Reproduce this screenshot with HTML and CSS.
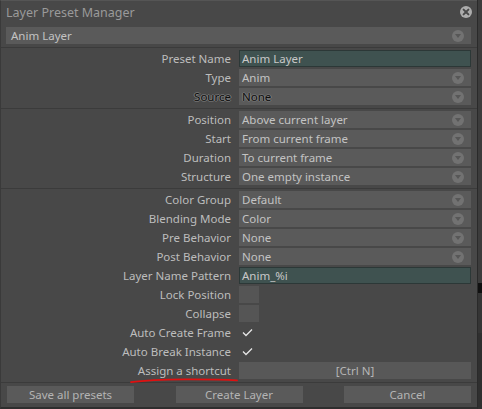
FILE: index.html
```html
<!DOCTYPE html>
<html>
<head>
<meta charset="utf-8">
<link rel="stylesheet" href="styles.css">
</head>
<body>
<div class="screen">
  <div class="dialog">
    <div class="titlebar">
      <span class="title">Layer Preset Manager</span>
      <span class="close"><svg width="12" height="12" viewBox="0 0 12 12"><circle cx="6" cy="6" r="6" fill="#adadad"/><path d="M3.6 3.6 L8.4 8.4 M8.4 3.6 L3.6 8.4" stroke="#4a4a4a" stroke-width="2" stroke-linecap="round"/></svg></span>
    </div>
    <div class="presetbar">
      <div class="combo top"><span>Anim Layer</span><i class="arrow"></i></div>
    </div>

    <div class="section">
      <div class="row"><label>Preset Name</label><div class="text">Anim Layer</div></div>
      <div class="row"><label>Type</label><div class="combo"><span>Anim</span><i class="arrow"></i></div></div>
      <div class="row dim"><label>Source</label><div class="combo"><span>None</span><i class="arrow"></i></div></div>
    </div>

    <div class="section">
      <div class="row"><label>Position</label><div class="combo"><span>Above current layer</span><i class="arrow"></i></div></div>
      <div class="row"><label>Start</label><div class="combo"><span>From current frame</span><i class="arrow"></i></div></div>
      <div class="row"><label>Duration</label><div class="combo"><span>To current frame</span><i class="arrow"></i></div></div>
      <div class="row"><label>Structure</label><div class="combo"><span>One empty instance</span><i class="arrow"></i></div></div>
    </div>

    <div class="section">
      <div class="row"><label>Color Group</label><div class="combo"><span>Default</span><i class="arrow"></i></div></div>
      <div class="row"><label>Blending Mode</label><div class="combo"><span>Color</span><i class="arrow"></i></div></div>
      <div class="row"><label>Pre Behavior</label><div class="combo"><span>None</span><i class="arrow"></i></div></div>
      <div class="row"><label>Post Behavior</label><div class="combo"><span>None</span><i class="arrow"></i></div></div>
      <div class="row"><label>Layer Name Pattern</label><div class="text">Anim_%i</div></div>
      <div class="row"><label>Lock Position</label><div class="box"></div></div>
      <div class="row"><label>Collapse</label><div class="box"></div></div>
      <div class="row"><label>Auto Create Frame</label><div class="check"><svg width="11" height="9" viewBox="0 0 11 9"><path d="M1 4.5 L4 7.5 L10 1.5" fill="none" stroke="#e6e6e6" stroke-width="1.3"/></svg></div></div>
      <div class="row"><label>Auto Break Instance</label><div class="check"><svg width="11" height="9" viewBox="0 0 11 9"><path d="M1 4.5 L4 7.5 L10 1.5" fill="none" stroke="#e6e6e6" stroke-width="1.3"/></svg></div></div>
      <div class="row"><label>Assign a shortcut</label><div class="shortcut">[Ctrl N]</div></div>
      <svg class="annot" width="110" height="6" viewBox="0 0 110 6"><path d="M1 4.2 Q 20 1.6 55 1.4 Q 90 1.3 107 2.4" fill="none" stroke="#e01010" stroke-width="1.8" stroke-linecap="round"/></svg>
    </div>

    <div class="buttons">
      <div class="btn">Save all presets</div>
      <div class="btn">Create Layer</div>
      <div class="btn">Cancel</div>
    </div>
  </div>
  <div class="strip">
    <div class="s1"></div>
    <div class="s2"></div>
    <div class="s3"></div>
    <div class="s4"></div>
  </div>
</div>
</body>
</html>
```
FILE: styles.css
```css
html, body {
  margin: 0;
  padding: 0;
  background: #2c2c2c;
}
body {
  font-family: "Noto Sans", "Open Sans", sans-serif;
  font-size: 11.5px;
  color: #bdbdbd;
}
.screen {
  display: flex;
  width: 482px;
  height: 409px;
  overflow: hidden;
}
.dialog {
  width: 476px;
  height: 406px;
  background: #484848;
  border-left: 1px solid #3a3a3a;
  border-top: 1px solid #555;
  border-bottom: 2px solid #2e2e2e;
  display: flex;
  flex-direction: column;
  position: relative;
}
.titlebar {
  height: 23px;
  display: flex;
  align-items: center;
  justify-content: space-between;
  padding: 0 5px 0 5px;
}
.title {
  color: #9a9a9a;
  font-size: 12.5px;
}
.close {
  display: flex;
  margin-top: -1px;
}
.presetbar {
  padding: 3px 6px 3px 5px;
  border-bottom: 1px solid #3b3b3b;
}
.combo {
  height: 17px;
  background: #5a5a5a;
  display: flex;
  align-items: center;
  justify-content: space-between;
  padding: 0 7px 0 3px;
  color: #c3c3c3;
}
.combo.top {
  padding-left: 5px;
}
.arrow {
  width: 12px;
  height: 12px;
  border-radius: 50%;
  background: #727272;
  position: relative;
}
.arrow::after {
  content: "";
  position: absolute;
  left: 2.5px;
  top: 4px;
  border-left: 3.5px solid transparent;
  border-right: 3.5px solid transparent;
  border-top: 4px solid #575757;
}
.section {
  display: flex;
  flex-direction: column;
  gap: 2px;
  padding: 2px 6px 3px 0;
  border-bottom: 1px solid #3b3b3b;
  position: relative;
}
.row {
  display: grid;
  grid-template-columns: 230px 1fr;
  column-gap: 8px;
  height: 17px;
  align-items: center;
}
.row label {
  text-align: right;
  white-space: nowrap;
  line-height: 17px;
}
.row.dim label, .row.dim .combo span {
  color: #101010;
  text-shadow: 1px 0 0 #7c7c7c, -1px 0 0 #7c7c7c, 0 1px 0 #6e6e6e, 0 -1px 0 #6e6e6e;
}
.text {
  height: 15px;
  background: #3f5250;
  border: 1px solid #2c3837;
  color: #c8c8c8;
  padding: 0 2px;
  line-height: 15px;
}
.box {
  width: 20px;
  height: 17px;
  background: #555555;
}
.check {
  height: 17px;
  display: flex;
  align-items: center;
  padding-left: 3px;
}
.shortcut {
  height: 17px;
  background: #585858;
  text-align: center;
  line-height: 17px;
  color: #b6b6b6;
}
.annot {
  position: absolute;
  left: 129px;
  bottom: -2px;
}
.buttons {
  display: flex;
  justify-content: space-between;
  padding: 3px 6px 0 6px;
}
.btn {
  width: 127px;
  height: 17px;
  background: #5a5a5a;
  text-align: center;
  line-height: 17px;
  color: #b4b4b4;
}
.strip {
  flex: 1;
  background: #3a3a3a;
  border-left: 1px solid #2a2a2a;
  display: flex;
  flex-direction: column;
}
.s1 { height: 283px; background: #3c3c3c; }
.s2 { height: 10px; background: #101010; }
.s3 { height: 40px; background: #353535; }
.s4 { flex: 1; background: #2f2f2f; }
```
